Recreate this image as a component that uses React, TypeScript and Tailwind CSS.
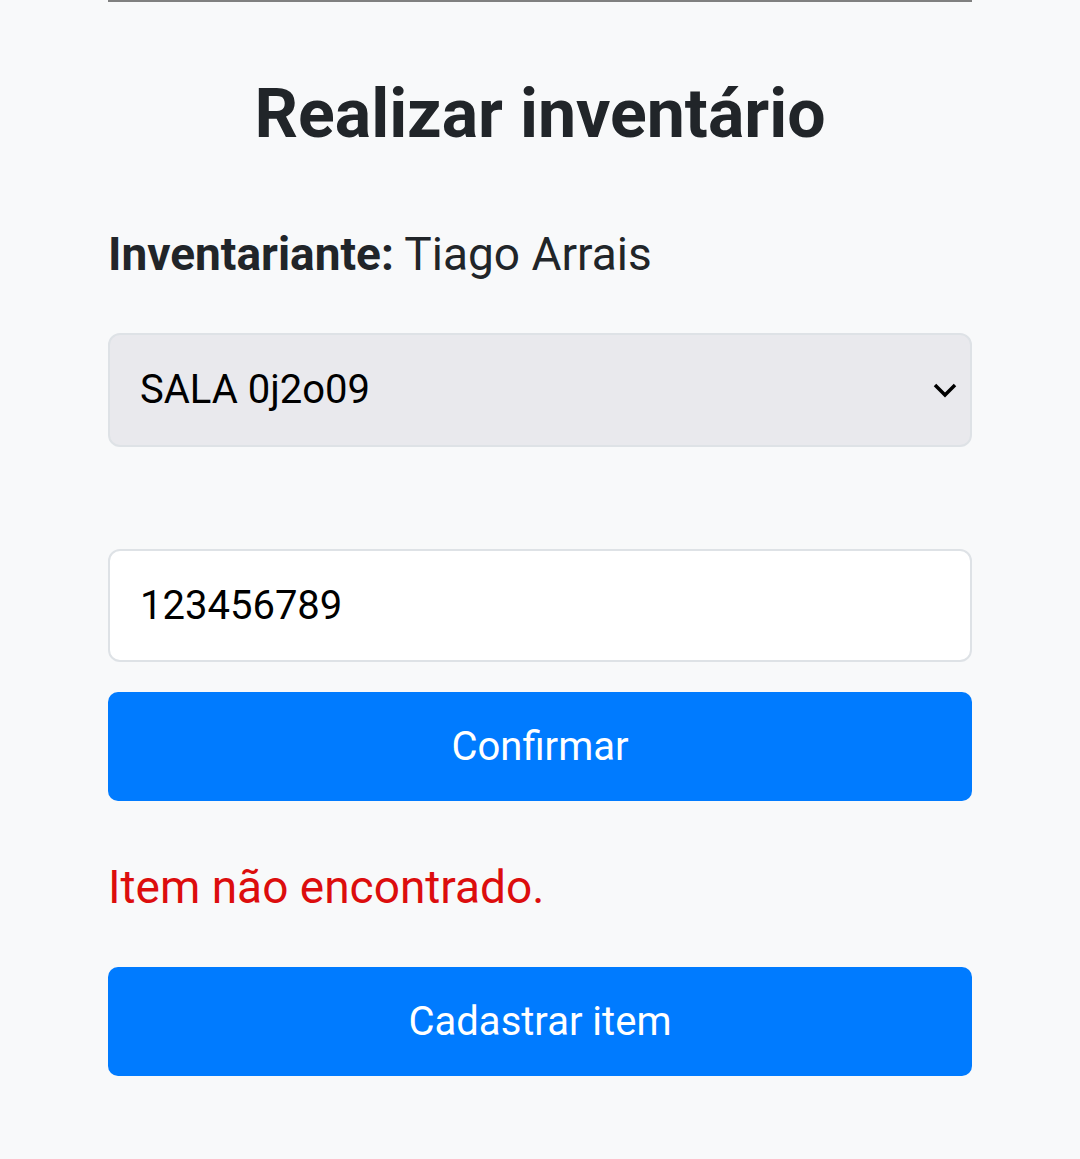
import React from "react";

export default function App() {
  return (
    <div className="min-h-[1159px] w-[1080px] bg-[#f8f9fa]" style={{ fontFamily: "Roboto, 'Noto Sans', sans-serif" }}>
      <div className="mx-[108px] flex flex-col">
        <div className="h-[2px] bg-[#808080]" />
        <h1 className="mt-[70px] text-center text-[68px] font-bold leading-[84px] text-[#212529]">Realizar inventário</h1>
        <p className="mt-[68px] text-[46px] leading-[60px] text-[#212529]">
          <span className="font-bold">Inventariante:</span> Tiago Arrais
        </p>
        <div className="mt-[49px] flex h-[114px] items-center justify-between rounded-[12px] border-2 border-[#dee2e6] bg-[#e9e9ed] pl-[30px] pr-[14px]">
          <span className="text-[40px] text-black">SALA 0j2o09</span>
          <svg width="26" height="18" viewBox="0 0 26 18" className="-mr-[2px]">
            <path d="M3 4 L13 14 L23 4" fill="none" stroke="#000" strokeWidth="3.5" />
          </svg>
        </div>
        <div className="mt-[102px] flex h-[113px] items-center rounded-[12px] border-2 border-[#dee2e6] bg-white pl-[30px]">
          <span className="text-[40px] text-black">123456789</span>
        </div>
        <button className="mt-[30px] flex h-[109px] items-center justify-center rounded-[10px] bg-[#007bff] text-[40px] text-white">Confirmar</button>
        <p className="mt-[56px] text-[46px] leading-[60px] text-[#dc0d0d]">Item não encontrado.</p>
        <button className="mt-[50px] flex h-[109px] items-center justify-center rounded-[10px] bg-[#007bff] text-[40px] text-white">Cadastrar item</button>
      </div>
    </div>
  );
}
